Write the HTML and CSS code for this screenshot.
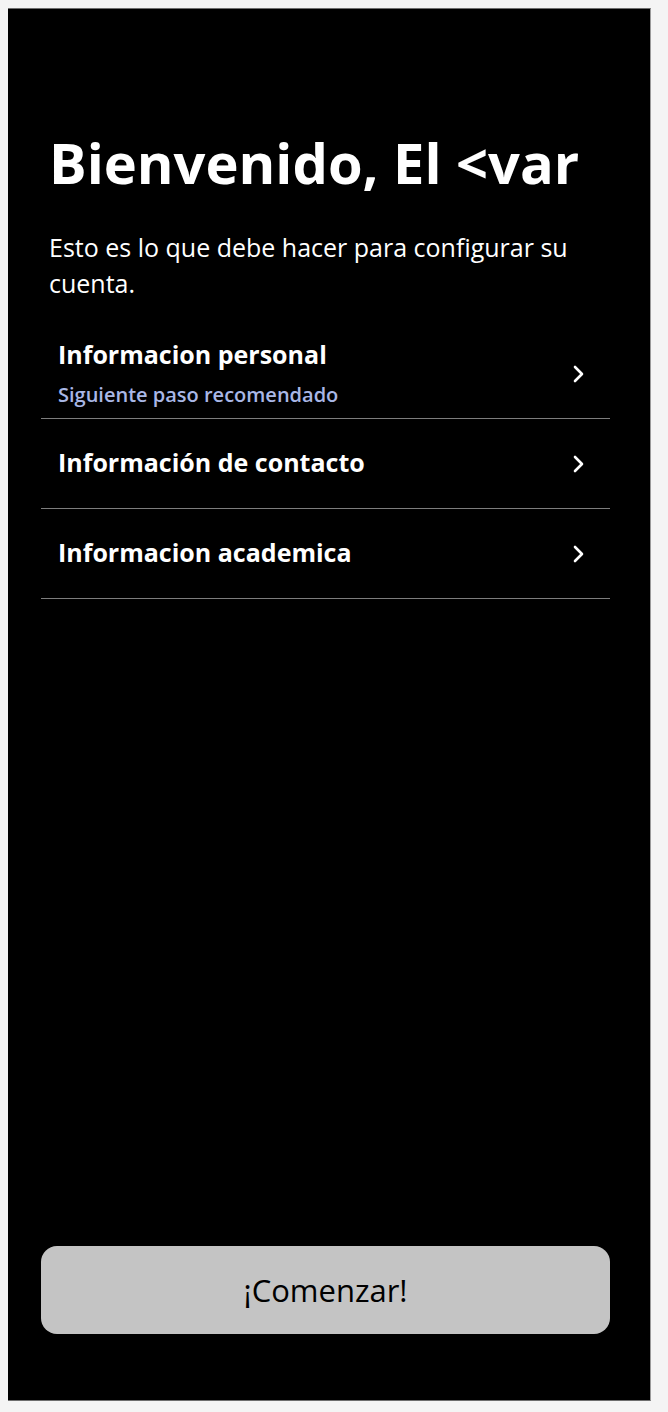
FILE: index.html
```html
<!DOCTYPE html>
<html lang="es">

<head>
    <meta charset="UTF-8">
    <meta name="viewport" content="width=device-width, initial-scale=1.0">
    <title>Bienvenido</title>
    <link rel="stylesheet" href="styles.css">
</head>

<body>
    <div class="screen">
        <div class="intro">
            <h1>Bienvenido, El &lt;var</h1>
            <p>Esto es lo que debe hacer para configurar su cuenta.</p>
        </div>

        <ul class="steps">
            <li class="step">
                <div class="step-text">
                    <span class="step-title">Informacion personal</span>
                    <span class="step-hint">Siguiente paso recomendado</span>
                </div>
                <svg class="chevron" viewBox="0 0 12 18" width="12" height="18">
                    <path d="M2 2l7 7-7 7" />
                </svg>
            </li>
            <li class="step">
                <div class="step-text">
                    <span class="step-title">Información de contacto</span>
                </div>
                <svg class="chevron" viewBox="0 0 12 18" width="12" height="18">
                    <path d="M2 2l7 7-7 7" />
                </svg>
            </li>
            <li class="step">
                <div class="step-text">
                    <span class="step-title">Informacion academica</span>
                </div>
                <svg class="chevron" viewBox="0 0 12 18" width="12" height="18">
                    <path d="M2 2l7 7-7 7" />
                </svg>
            </li>
        </ul>

        <button type="button" class="start-btn">¡Comenzar!</button>
    </div>
</body>

</html>
```

FILE: styles.css
```css
body {
    margin: 8px;
    background-color: #f4f4f4;
    font-family: 'Open Sans', 'Lato', sans-serif;
}

.screen {
    width: 569px;
    height: 1206px;
    background-color: #000;
    color: #fff;
    border-top: 1px solid #6e6e6e;
    border-right: 1px solid #9a9a9a;
    border-bottom: 1px solid #6e6e6e;
    display: flex;
    flex-direction: column;
    padding: 119px 40px 66px 33px;
}

.intro {
    padding-left: 8px;
}

h1 {
    margin: 0;
    font-size: 56px;
    line-height: 68px;
    font-weight: 700;
}

.intro p {
    margin: 33px 0 0;
    font-size: 25px;
    line-height: 36px;
    font-weight: 400;
}

.steps {
    list-style: none;
    margin: 28px 0 0;
    padding: 0;
}

.step {
    height: 89px;
    border-bottom: 1px solid #7d7d7d;
    display: flex;
    align-items: center;
    justify-content: space-between;
    padding: 0 25px 0 17px;
}

.step-text {
    display: flex;
    flex-direction: column;
    gap: 13px;
    margin-bottom: 3px;
}

.step-title {
    font-size: 25px;
    font-weight: 700;
    line-height: 32px;
}

.step-hint {
    font-size: 20px;
    font-weight: 600;
    line-height: 24px;
    color: #a9b7e6;
}

.chevron {
    fill: none;
    stroke: #fff;
    stroke-width: 2.6;
    stroke-linecap: round;
    stroke-linejoin: round;
}

.start-btn {
    margin-top: auto;
    height: 88px;
    width: 100%;
    border: none;
    border-radius: 16px;
    background-color: #c4c4c4;
    color: #000;
    font-family: 'Open Sans', 'Lato', sans-serif;
    font-size: 31px;
    cursor: pointer;
}
```
